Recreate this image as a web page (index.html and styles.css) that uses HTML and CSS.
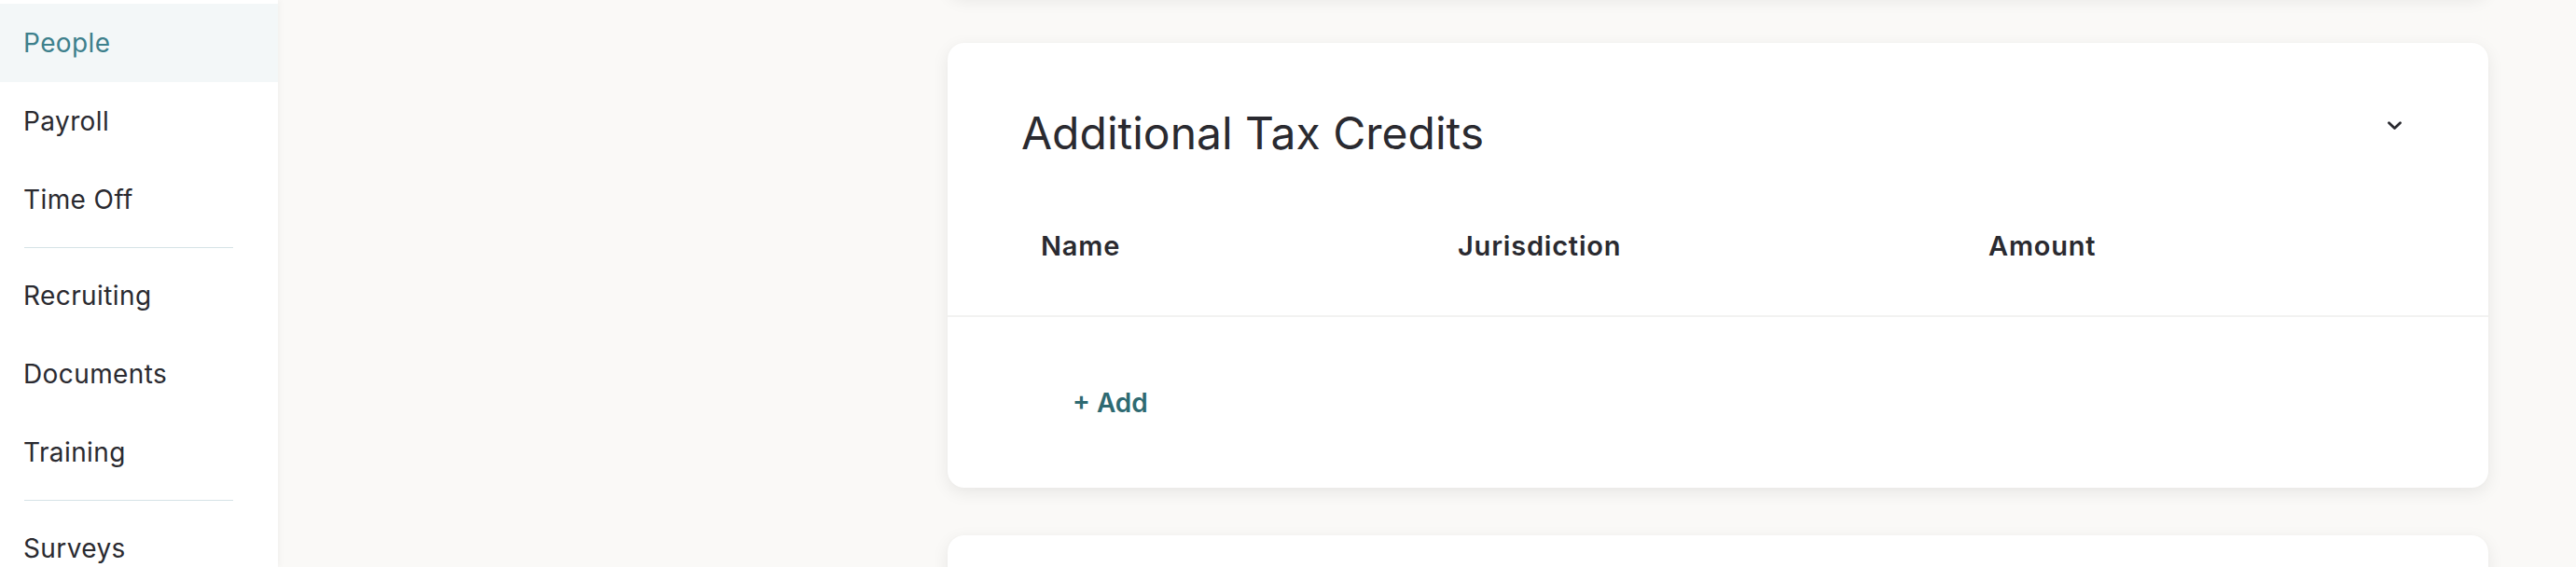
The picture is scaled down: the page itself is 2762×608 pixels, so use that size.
FILE: index.html
```html
<!DOCTYPE html>
<html lang="en">
<head>
    <meta charset="UTF-8">
    <meta name="viewport" content="width=device-width, initial-scale=1.0">
    <title>Additional Tax Credits</title>
    <link rel="stylesheet" href="styles.css">
</head>
<body>
    <div class="app">
        <nav class="sidebar">
            <a class="nav-item active" href="#">People</a>
            <a class="nav-item" href="#">Payroll</a>
            <a class="nav-item" href="#">Time Off</a>
            <hr class="nav-divider">
            <a class="nav-item" href="#">Recruiting</a>
            <a class="nav-item" href="#">Documents</a>
            <a class="nav-item" href="#">Training</a>
            <hr class="nav-divider">
            <a class="nav-item" href="#">Surveys</a>
        </nav>

        <main class="content">
            <section class="card card-prev"></section>

            <section class="card">
                <div class="card-head">
                    <h2 class="card-title">Additional Tax Credits</h2>
                    <button class="toggle" aria-label="Collapse">
                        <svg width="15" height="10" viewBox="0 0 15 10">
                            <path d="M1.5 1.8 L7.5 7.6 L13.5 1.8" fill="none" stroke="currentColor" stroke-width="2.8" stroke-linecap="round" stroke-linejoin="round"/>
                        </svg>
                    </button>
                </div>
                <div class="table-head">
                    <span>Name</span>
                    <span>Jurisdiction</span>
                    <span>Amount</span>
                </div>
                <div class="table-foot">
                    <button class="add-btn">+ Add</button>
                </div>
            </section>

            <section class="card card-next"></section>
        </main>
    </div>
</body>
</html>
```

FILE: styles.css
```css
:root {
    --page-bg: #faf9f7;
    --text: #2a2a30;
    --teal: #3d808c;
    --teal-dark: #2e6a72;
    --active-bg: #f3f7f8;
    --nav-line: #d6e3e6;
    --row-line: #f2f2f1;
}
body {
    margin: 0;
    height: 608px;
    overflow: hidden;
    background: var(--page-bg);
    font-family: 'Inter', 'Liberation Sans', sans-serif;
    color: var(--text);
}
.app {
    display: flex;
    height: 100%;
    overflow: hidden;
}
.sidebar {
    width: 298px;
    flex-shrink: 0;
    padding-top: 4px;
    background: #fff;
    box-shadow: 2px 0 6px rgba(0, 0, 0, 0.035);
    display: flex;
    flex-direction: column;
}
.nav-item {
    display: block;
    height: 84px;
    line-height: 84px;
    padding-left: 25px;
    font-size: 28px;
    letter-spacing: 0.4px;
    color: var(--text);
    text-decoration: none;
}
.nav-item.active {
    background: var(--active-bg);
    color: var(--teal);
}
.nav-divider {
    border: none;
    border-top: 1px solid var(--nav-line);
    margin: 9px 48px 9px 26px;
}
.content {
    flex: 1;
    padding-left: 718px;
    padding-right: 94px;
}
.card {
    background: #fff;
    border-radius: 18px;
    box-shadow: 0 5px 18px rgba(0, 0, 0, 0.08), 0 0 3px rgba(0, 0, 0, 0.02);
    margin-bottom: 51px;
}
.card-prev {
    height: 100px;
    margin-top: -105px;
}
.card-next {
    height: 200px;
}
.card-head {
    display: flex;
    justify-content: space-between;
    align-items: flex-start;
    padding: 68px 93px 0 79px;
}
.card-title {
    margin: 0;
    font-size: 48px;
    font-weight: 400;
    line-height: 58px;
}
.toggle {
    border: none;
    background: none;
    padding: 0;
    margin-top: 16px;
    color: var(--text);
    cursor: pointer;
}
.toggle svg {
    display: block;
}
.table-head {
    display: grid;
    grid-template-columns: 447px 569px 1fr;
    margin-top: 74px;
    padding: 0 0 57px 100px;
    border-bottom: 2px solid var(--row-line);
    font-size: 29px;
    font-weight: 600;
    letter-spacing: 0.8px;
    line-height: 35px;
}
.table-foot {
    padding: 75px 0 74px 134px;
}
.add-btn {
    border: none;
    background: none;
    padding: 0;
    font-family: inherit;
    font-size: 28px;
    font-weight: 600;
    line-height: 34px;
    color: var(--teal-dark);
    cursor: pointer;
}
```
